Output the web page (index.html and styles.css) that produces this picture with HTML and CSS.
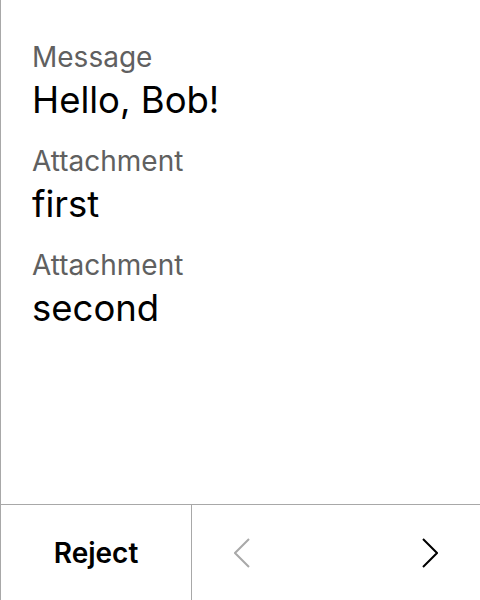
FILE: index.html
```html
<!DOCTYPE html>
<html>
<head>
<meta charset="utf-8">
<link rel="stylesheet" href="styles.css">
</head>
<body>
<div class="screen">
  <div class="content">
    <div class="field">
      <div class="label">Message</div>
      <div class="value">Hello, Bob!</div>
    </div>
    <div class="field">
      <div class="label">Attachment</div>
      <div class="value">first</div>
    </div>
    <div class="field">
      <div class="label">Attachment</div>
      <div class="value">second</div>
    </div>
  </div>
  <div class="bar">
    <div class="reject">Reject</div>
    <div class="nav">
      <svg class="chev chev-prev" width="16" height="30" viewBox="0 0 16 30"><polyline points="15,1 1,15 15,29" fill="none" stroke="#a9a9a9" stroke-width="2"/></svg>
      <svg class="chev chev-next" width="16" height="30" viewBox="0 0 16 30"><polyline points="1,1 15,15 1,29" fill="none" stroke="#000" stroke-width="2"/></svg>
    </div>
  </div>
</div>
</body>
</html>
```
FILE: styles.css
```css
* { box-sizing: border-box; }
html, body { margin: 0; padding: 0; background: #fff; }
body {
  font-family: Inter, "Noto Sans", sans-serif;
  color: #000;
}
.screen {
  width: 480px;
  height: 600px;
  border-left: 1px solid #a8a8a8;
  display: flex;
  flex-direction: column;
}
.content {
  flex: 1;
  padding: 40px 0 0 31px;
  display: flex;
  flex-direction: column;
  gap: 22px;
}
.label {
  font-size: 28px;
  line-height: 34px;
  color: #606060;
}
.value {
  font-size: 36.5px;
  line-height: 44px;
  margin-top: 4px;
  color: #000;
}
.bar {
  height: 96px;
  border-top: 1px solid #a8a8a8;
  display: flex;
}
.reject {
  width: 191px;
  border-right: 1px solid #a8a8a8;
  display: flex;
  align-items: center;
  justify-content: center;
  font-size: 28px;
  font-weight: 600;
}
.nav {
  flex: 1;
  display: flex;
  align-items: center;
  justify-content: space-between;
  padding: 0 42px;
}
.chev { display: block; }
```
